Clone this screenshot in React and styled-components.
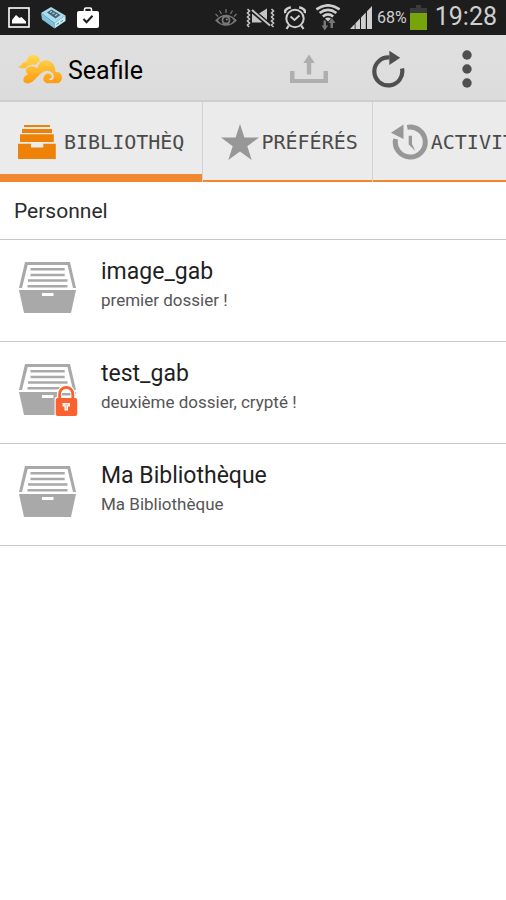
import React from 'react';
import styled, { createGlobalStyle } from 'styled-components';

const GlobalStyle = createGlobalStyle`
    * {
        box-sizing: border-box;
    }
    body {
        margin: 0;
        background: #fff;
        font-family: Roboto, "Noto Sans", sans-serif;
        overflow-x: hidden;
    }
    button {
        font: inherit;
        color: inherit;
        border: 0;
        padding: 0;
        background: none;
        cursor: pointer;
    }
    svg {
        display: block;
        flex: none;
    }
`;

/* ---- status bar icons ---- */

const PictureIcon = () => (
    <svg width="22" height="21" viewBox="0 0 22 21">
        <rect x="1" y="1" width="20" height="19" fill="none" stroke="#fff" strokeWidth="1.6" />
        <path d="M4 16.5V13L8 8L11.5 11L13.5 10L18 14.5V16.5Z" fill="#fff" />
    </svg>
);

const BoxIcon = () => (
    <svg width="25" height="22" viewBox="0 0 25 22">
        <path d="M0 6L10 0L24.5 8.5L13.5 16Z" fill="#a9dcf0" />
        <path d="M0 6L13.5 16V21.5L1 12.5Z" fill="#7fc0dc" />
        <path d="M13.5 16L24.5 8.5V14L13.5 21.5Z" fill="#c4ecf8" />
        <path d="M6 5.5L10.5 2.5L19.5 8L14.5 11.5Z" fill="#49626e" />
        <path d="M9 5.5L11 4.2M11.5 7L13.5 5.8M14 8.7L16.2 7.3" stroke="#a9dcf0" strokeWidth="1.2" />
        <path d="M15.5 17.5L18 16M19.5 15L22 13.2" stroke="#5d8799" strokeWidth="1" />
    </svg>
);

const BagIcon = () => (
    <svg width="22" height="21" viewBox="0 0 22 21">
        <path d="M7.5 5V2.5Q7.5 1 9 1H13Q14.5 1 14.5 2.5V5" fill="none" stroke="#fff" strokeWidth="1.6" />
        <rect y="4" width="22" height="17" rx="2" fill="#fff" />
        <path d="M6.5 12L9.5 15.2L15.5 8.7" fill="none" stroke="#1d1d1d" strokeWidth="2" />
    </svg>
);

const EyeIcon = () => (
    <svg width="22" height="18" viewBox="0 0 22 18">
        <path d="M0 11.5Q11 0 22 11.5Q11 22 0 11.5Z" fill="#777" />
        <path d="M3 11.5Q5 8.5 7.5 7.8Q5.5 11.5 8 15.2Q5 14.2 3 11.5ZM19 11.5Q17 8.5 14.5 7.8Q16.5 11.5 14 15.2Q17 14.2 19 11.5Z" fill="#1d1d1d" />
        <circle cx="11" cy="11" r="2.6" fill="#1d1d1d" />
        <circle cx="11.8" cy="10.4" r="1" fill="#888" />
        <path d="M11 0V4M4.5 1.5L6.5 5M17.5 1.5L15.5 5M.5 5L3 7.5M21.5 5L19 7.5" stroke="#777" strokeWidth="1.2" />
    </svg>
);

const VibrateIcon = () => (
    <svg width="29" height="20" viewBox="0 0 29 20">
        <path d="M1.5 1L3.5 3L1.5 5L3.5 7L1.5 9L3.5 11L1.5 13L3.5 15L1.5 17L3 19M25.5 1L27.5 3L25.5 5L27.5 7L25.5 9L27.5 11L25.5 13L27.5 15L25.5 17L27.5 19" fill="none" stroke="#c4c4c4" strokeWidth="1.6" />
        <path d="M6 5.5L16 14L14.5 14.5H6Z" fill="#c4c4c4" />
        <path d="M13 5.5L21 .5V12Z" fill="#c4c4c4" />
        <path d="M6 2L24 17.5" stroke="#1d1d1d" strokeWidth="4" />
        <path d="M6 2L24 17.5" stroke="#c4c4c4" strokeWidth="2" />
    </svg>
);

const AlarmIcon = () => (
    <svg width="22" height="24" viewBox="0 0 22 24">
        <circle cx="11" cy="12.5" r="8.7" fill="none" stroke="#cfcfcf" strokeWidth="2" />
        <path d="M6.5 10.5L10.5 14L15.5 9.5" fill="none" stroke="#cfcfcf" strokeWidth="1.8" />
        <path d="M1.2 7.2Q0 3 6.8 1.3M20.8 7.2Q22 3 15.2 1.3" fill="none" stroke="#cfcfcf" strokeWidth="2.6" />
        <path d="M4.8 19.5L2.5 23M17.2 19.5L19.5 23" stroke="#cfcfcf" strokeWidth="2.2" />
    </svg>
);

const WifiIcon = () => (
    <svg width="26" height="27" viewBox="-1 0 26 27">
        <g fill="none" stroke="#cfcfcf" strokeWidth="2.6">
            <path d="M.4 5.4Q12 -2.8 23.6 5.4" />
            <path d="M3.6 9Q12 2.8 20.4 9" />
            <path d="M6.8 12.5Q12 8.2 17.2 12.5" />
        </g>
        <path d="M9 14.4Q12 12.4 15 14.4L12 17.5Z" fill="#cfcfcf" />
        <path d="M7.5 16.5H10V21.5H12.2L8.8 26.5L5.5 21.5H7.5Z" fill="#777" />
        <path d="M14.5 24H17V19H19.5L15.8 14L12.4 19H14.5Z" fill="#777" />
    </svg>
);

const SignalIcon = () => (
    <svg width="22" height="23" viewBox="0 0 22 23">
        <path d="M0 23L4.7 18V23ZM5.5 17.2L10 12.5V23H5.5ZM11 11.5L15.8 6.5V23H11ZM17 5.2L22 0V23H17Z" fill="#cfcfcf" />
    </svg>
);

const BatteryIcon = () => (
    <svg width="17" height="25" viewBox="0 0 17 25">
        <path d="M0 3H6V0H11V3H17V9H0Z" fill="#3b3b3b" />
        <rect y="8" width="17" height="17" fill="#77a30b" />
    </svg>
);

/* ---- action bar icons ---- */

const SeafileLogo = () => (
    <svg width="44" height="29" viewBox="0 0 132 87">
        <defs>
            <linearGradient id="cloud" gradientUnits="userSpaceOnUse" x1="0" y1="0" x2="0" y2="86">
                <stop offset="0" stopColor="#ffda50" />
                <stop offset="1" stopColor="#ff9a12" />
            </linearGradient>
        </defs>
        <path
            d="M0 36Q9 33 12 27Q17 19 27 19Q27 0 46 0Q64 1 66 18Q58 22 54 29Q36 26 27 39Q14 43 0 36Z"
            fill="url(#cloud)"
        />
        <path
            d="M18 66L30 56Q22 53 24 46Q27 34 42 34Q52 34 58 40Q62 18 84 16Q110 18 113 51Q131 50 132 68Q131 84 115 85H86Q72 78 77 66Q82 54 94 56Q103 59 101 67Q98 73 91 70Q96 79 103 74Q111 67 105 56Q99 47 87 47Q77 47 68 56L45 79Q37 87 25 85Q11 81 18 66Z"
            fill="url(#cloud)"
            stroke="#dedede"
            strokeWidth="6"
            paintOrder="stroke"
        />
    </svg>
);

const UploadIcon = () => (
    <svg width="38" height="30" viewBox="0 0 38 30">
        <path d="M0 17H4.5V25H33.5V17H38V29H0Z" fill="#aeaeae" />
        <path d="M19 .5L24.7 9H21.2V20.5H16.8V9H13.3Z" fill="#aeaeae" />
    </svg>
);

const RefreshIcon = () => (
    <svg width="33" height="38" viewBox="0 0 33 38">
        <path d="M30 18.5A14 14 0 1 1 17.5 7.5" fill="none" stroke="#4f4f4f" strokeWidth="4.2" />
        <path d="M17.3 .7L28.2 7.8L17.3 15Z" fill="#4f4f4f" />
    </svg>
);

const MoreIcon = () => (
    <svg width="10" height="38" viewBox="0 0 10 38">
        <circle cx="5" cy="5" r="4.7" fill="#4f4f4f" />
        <circle cx="5" cy="19" r="4.7" fill="#4f4f4f" />
        <circle cx="5" cy="33" r="4.7" fill="#4f4f4f" />
    </svg>
);

/* ---- tab icons ---- */

const DrawersIcon = () => (
    <svg width="38" height="34" viewBox="0 0 38 34">
        <path
            d="M6 0H32V2H6ZM4 4H34V8H4ZM2 9.2H35.8V17H2ZM0 18.8H13V22.6H25.3V18.8H37.8V34H0Z"
            fill="#ee8208"
        />
    </svg>
);

const StarIcon = () => (
    <svg width="38" height="36" viewBox="0 0 38 36">
        <path
            d="M19 0L23.4 13.6H38L26.3 22.3L30.7 36L19 27.5L7.3 36L11.7 22.3L0 13.6H14.6Z"
            fill="#979797"
        />
    </svg>
);

const HistoryIcon = () => (
    <svg width="38" height="36" viewBox="0 0 38 36">
        <path d="M16.3 3.4A15 15 0 1 1 4.6 15" fill="none" stroke="#979797" strokeWidth="5" />
        <path d="M12.5 .4V15L0 8.7Z" fill="#979797" />
        <path d="M17.7 11.7H21V20L24.3 27L17.7 20.5Z" fill="#979797" />
    </svg>
);

/* ---- list icon ---- */

const LibraryIcon = ({ locked }) => (
    <svg width="60" height="54" viewBox="0 0 60 54">
        <path d="M6 0H51L57 26H54L48.5 3H8.7L3 26H0Z" fill="#a9a9a9" />
        <path
            d="M11.5 6H45.7V8.6H11.5ZM11.5 11.7H45.7V14.3H11.5ZM9 17.2H48.5V19.8H9ZM8.5 22.9H48.5V25.5H8.5Z"
            fill="#a9a9a9"
        />
        <path d="M0 28H57L52 51H5Z" fill="#a9a9a9" />
        <rect x="23" y="31" width="11.5" height="3" fill="#fff" />
        {locked && (
            <>
                <path
                    d="M40.6 35V30A6.6 6.6 0 0 1 53.8 30V35"
                    fill="#fff"
                    stroke="#fff"
                    strokeWidth="5.4"
                />
                <rect x="35.6" y="32.8" width="23.8" height="20.4" rx="2.5" fill="#fff" />
                <path d="M43 29H51.5V31.5H43Z" fill="#a9a9a9" />
                <path
                    d="M40.6 35V30A6.6 6.6 0 0 1 53.8 30V35"
                    fill="none"
                    stroke="#fb6230"
                    strokeWidth="2.8"
                />
                <rect x="36.7" y="34" width="21.5" height="18" rx="2" fill="#fb6230" />
                <path d="M43.5 39H51V42.5H49V46.5H45.5V42.5H43.5Z" fill="#fff" />
                <path d="M45.5 40.8H49M47.2 40.8V45" stroke="#fb9a7a" strokeWidth=".8" />
            </>
        )}
    </svg>
);

const tabs = [
    { id: 'library', label: 'BIBLIOTHÈQ', icon: <DrawersIcon />, gap: 8 },
    { id: 'starred', label: 'PRÉFÉRÉS', icon: <StarIcon />, gap: 2 },
    { id: 'activity', label: 'ACTIVITÉS', icon: <HistoryIcon />, gap: 2 },
];

const libraries = [
    { id: 1, name: 'image_gab', description: 'premier dossier !' },
    { id: 2, name: 'test_gab', description: 'deuxième dossier, crypté !', locked: true },
    { id: 3, name: 'Ma Bibliothèque', description: 'Ma Bibliothèque' },
];

function App() {
    const [active, setActive] = React.useState('library');

    return (
        <>
            <GlobalStyle />
            <StatusBar>
                <Notifications>
                    <PictureIcon />
                    <BoxIcon />
                    <BagIcon />
                </Notifications>
                <SystemIcons>
                    <EyeIcon />
                    <VibrateIcon />
                    <AlarmIcon />
                    <WifiIcon />
                    <SignalIcon />
                </SystemIcons>
                <Charge>68%</Charge>
                <BatteryIcon />
                <Clock>19:28</Clock>
            </StatusBar>
            <ActionBar>
                <Brand>
                    <SeafileLogo />
                    <Title>Seafile</Title>
                </Brand>
                <Actions>
                    <button aria-label="Envoyer"><UploadIcon /></button>
                    <button aria-label="Actualiser"><RefreshIcon /></button>
                    <button aria-label="Plus d'options"><MoreIcon /></button>
                </Actions>
            </ActionBar>
            <TabBar role="tablist">
                {tabs.map(({ id, label, icon, gap }) => (
                    <Tab
                        key={id}
                        role="tab"
                        aria-selected={active === id}
                        $active={active === id}
                        $gap={gap}
                        onClick={() => setActive(id)}
                    >
                        {icon}
                        {label}
                    </Tab>
                ))}
            </TabBar>
            <main>
                <SectionTitle>Personnel</SectionTitle>
                <List>
                    {libraries.map((item) => (
                        <li key={item.id}>
                            <Row>
                                <LibraryIcon locked={item.locked} />
                                <RowText>
                                    <Name>{item.name}</Name>
                                    <Description>{item.description}</Description>
                                </RowText>
                            </Row>
                        </li>
                    ))}
                </List>
            </main>
        </>
    );
}

const StatusBar = styled.div`
    display: flex;
    align-items: center;
    height: 35px;
    padding: 0 9px 0 8px;
    background: #1d1d1d;
    color: #cfcfcf;
`;

const Notifications = styled.div`
    display: flex;
    align-items: center;
    gap: 11px;
    margin-right: auto;
`;

const SystemIcons = styled.div`
    display: flex;
    align-items: center;
    gap: 9px;
`;

const Charge = styled.span`
    margin: 0 3px 0 5px;
    font-size: 16px;
`;

const Clock = styled.time`
    margin-left: 8px;
    font-size: 25px;
    line-height: 32px;
    margin-bottom: 2px;
`;

const ActionBar = styled.header`
    display: flex;
    align-items: center;
    height: 67px;
    padding: 0 34px 0 18px;
    background: linear-gradient(#e0e0e0, #dcdcdc);
    border-bottom: 2px solid #cfcfcf;
`;

const Brand = styled.div`
    display: flex;
    align-items: center;
    gap: 6px;
    padding-top: 4px;
`;

const Title = styled.h1`
    margin: 0;
    padding-top: 2px;
    font-size: 25px;
    font-weight: 400;
    line-height: 32px;
    color: #000;
`;

const Actions = styled.div`
    display: flex;
    align-items: center;
    gap: 44px;
    margin-left: auto;
    padding-top: 2px;
    button:last-child {
        margin-left: 13px;
    }
`;

const TabBar = styled.div`
    display: flex;
    height: 80px;
    overflow: hidden;
    background: #ebebeb;
`;

const Tab = styled.button`
    display: flex;
    flex: none;
    align-items: center;
    gap: ${({ $gap }) => $gap}px;
    padding: 0 ${({ $active }) => ($active ? 18 : 14)}px 0 18px;
    border-right: 1px solid #d2d2d2;
    box-shadow: inset 0 ${({ $active }) => ($active ? -8 : -2)}px #f08832;
    font-family: "DejaVu Sans Mono", monospace;
    font-size: 20px;
    color: #4a4a4a;
`;

const SectionTitle = styled.h2`
    margin: 0;
    padding: 15px 14px 13px;
    border-bottom: 1px solid #c8c8c8;
    font-size: 21px;
    font-weight: 400;
    line-height: 29px;
    color: #2b2b2b;
`;

const List = styled.ul`
    margin: 0;
    padding: 0;
    list-style: none;
`;

const Row = styled.button`
    display: flex;
    align-items: flex-start;
    gap: 22px;
    width: 100%;
    height: 102px;
    padding: 22px 19px 0;
    border-bottom: 1px solid #c8c8c8;
    text-align: left;
`;

const RowText = styled.span`
    display: flex;
    flex-direction: column;
    gap: 2px;
`;

const Name = styled.span`
    font-size: 23px;
    line-height: 20px;
    color: #1f1f1f;
`;

const Description = styled.span`
    font-size: 17px;
    line-height: 32px;
    color: #555;
`;

export default App;
